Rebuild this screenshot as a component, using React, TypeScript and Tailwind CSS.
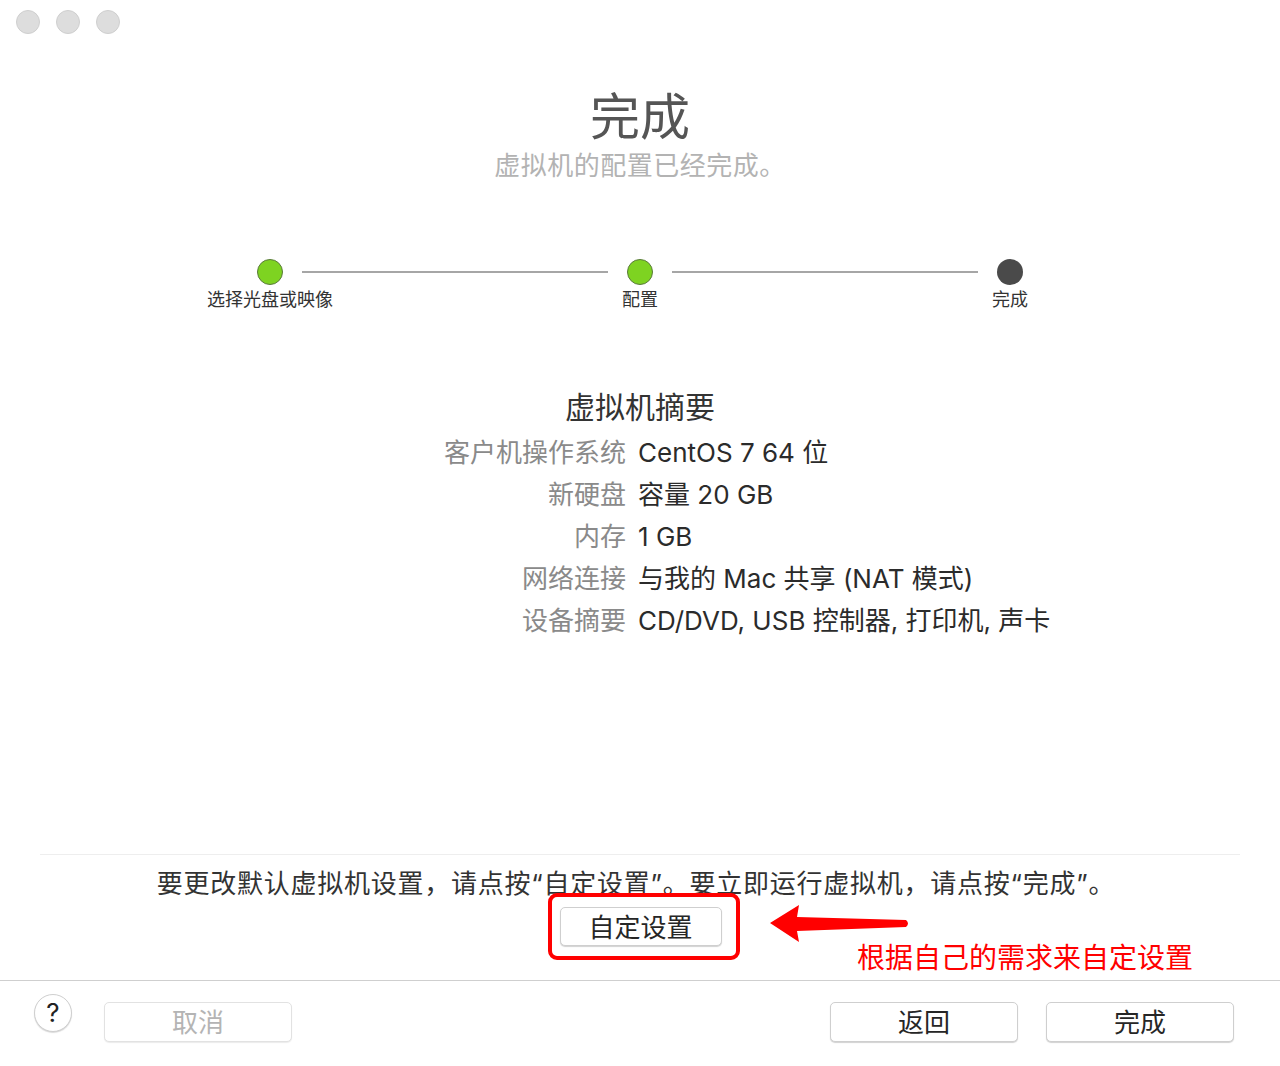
const font = {
  fontFamily: 'Inter, "Noto Sans CJK SC", "Noto Sans", sans-serif',
};

type Step = { label: string; done: boolean };

const steps: Step[] = [
  { label: "选择光盘或映像", done: true },
  { label: "配置", done: true },
  { label: "完成", done: false },
];

const summary: [string, string][] = [
  ["客户机操作系统", "CentOS 7 64 位"],
  ["新硬盘", "容量 20 GB"],
  ["内存", "1 GB"],
  ["网络连接", "与我的 Mac 共享 (NAT 模式)"],
  ["设备摘要", "CD/DVD, USB 控制器, 打印机, 声卡"],
];

function StepDot({ step }: { step: Step }) {
  return (
    <div className="flex w-[26px] flex-col items-center">
      <div
        className={
          step.done
            ? "h-[26px] w-[26px] rounded-full border border-[#5a7a3a] bg-[#7ed321]"
            : "h-[26px] w-[26px] rounded-full bg-[#4a4a4a]"
        }
      />
      <div className="mt-[3px] whitespace-nowrap text-[18px] leading-[24px] text-[#333]">
        {step.label}
      </div>
    </div>
  );
}

function MacButton({
  children,
  disabled,
  className,
}: {
  children: React.ReactNode;
  disabled?: boolean;
  className?: string;
}) {
  return (
    <button
      type="button"
      className={[
        "flex items-center justify-center rounded-[5px] border bg-white pt-[2px] text-[26px] leading-none",
        disabled
          ? "border-[#e2e2e2] text-[#b4b4b4] shadow-[0_1px_1px_rgba(0,0,0,0.08)]"
          : "border-[#cfcfcf] text-[#262626] shadow-[0_1px_1px_rgba(0,0,0,0.18)]",
        className ?? "",
      ].join(" ")}
    >
      {children}
    </button>
  );
}

export default function App() {
  return (
    <div
      className="relative flex h-[1066px] w-[1280px] flex-col overflow-hidden bg-white"
      style={font}
    >
      {/* traffic lights */}
      <div className="flex gap-4 pl-4 pt-[10px]">
        {[0, 1, 2].map((i) => (
          <div
            key={i}
            className="h-6 w-6 rounded-full border border-[#cfcfcf] bg-[#dddddd]"
          />
        ))}
      </div>

      <div className="mt-[53px] text-center text-[50px] leading-[60px] text-[#555]">
        完成
      </div>
      <div className="mt-[4px] text-center text-[26px] leading-[30px] tracking-[0.5px] text-[#b3b3b3]">
        虚拟机的配置已经完成。
      </div>

      {/* stepper */}
      <div className="mx-auto mt-[78px] flex w-[766px] items-start">
        <StepDot step={steps[0]} />
        <div className="mx-[19px] mt-[12px] h-[2px] flex-1 bg-[#a6a6a6]" />
        <StepDot step={steps[1]} />
        <div className="mx-[19px] mt-[12px] h-[2px] flex-1 bg-[#a6a6a6]" />
        <StepDot step={steps[2]} />
      </div>

      <div className="mt-[75px] text-center text-[30px] leading-[40px] text-[#333]">
        虚拟机摘要
      </div>

      <div className="mt-[5px] grid grid-cols-[626px_1fr] gap-x-3 text-[26px] leading-[42px]">
        {summary.map(([k, v]) => (
          <div key={k} className="contents">
            <div className="text-right text-[#8a8a8a]">{k}</div>
            <div className="text-[#2b2b2b]">{v}</div>
          </div>
        ))}
      </div>

      <div className="flex-1" />

      {/* instructions */}
      <div className="mx-10 border-t border-[#eeeeee]" />
      <div className="pr-[8px] pt-[11px] text-center text-[26px] leading-[36px] tracking-[0.75px] text-[#333]">
        要更改默认虚拟机设置，请点按“自定设置”。要立即运行虚拟机，请点按“完成”。
      </div>
      <div className="mt-[5px] flex justify-center pl-[1px]">
        <MacButton className="h-[39px] w-[162px]">自定设置</MacButton>
      </div>
      <div className="h-[34px]" />

      {/* footer */}
      <div className="flex h-[86px] items-start border-t border-[#cfcfcf] pl-[34px] pr-[46px]">
        <div className="mt-[13px] flex h-[38px] w-[38px] items-center justify-center rounded-full border border-[#cfcfcf] bg-white text-[26px] leading-none text-[#222] shadow-[0_1px_1px_rgba(0,0,0,0.15)]">
          ?
        </div>
        <MacButton disabled className="ml-8 mt-[21px] h-[40px] w-[188px]">
          取消
        </MacButton>
        <div className="flex-1" />
        <MacButton className="mt-[21px] h-[40px] w-[188px]">返回</MacButton>
        <MacButton className="ml-7 mt-[21px] h-[40px] w-[188px]">完成</MacButton>
      </div>

      {/* red annotation */}
      <div className="absolute left-[548px] top-[893px] h-[67px] w-[192px] rounded-[9px] border-4 border-[#ff0000]" />
      <svg
        className="absolute left-[760px] top-[895px]"
        width="160"
        height="60"
        viewBox="0 0 160 60"
      >
        <path
          d="M10 28 L39 10 L37 22 L146 25 Q150 28.5 146 32 L37 36 L39 47 Z"
          fill="#ff0000"
        />
      </svg>
      <div className="absolute left-[857px] top-[939px] whitespace-nowrap text-[28px] leading-[38px] text-[#ff0000]">
        根据自己的需求来自定设置
      </div>
    </div>
  );
}
